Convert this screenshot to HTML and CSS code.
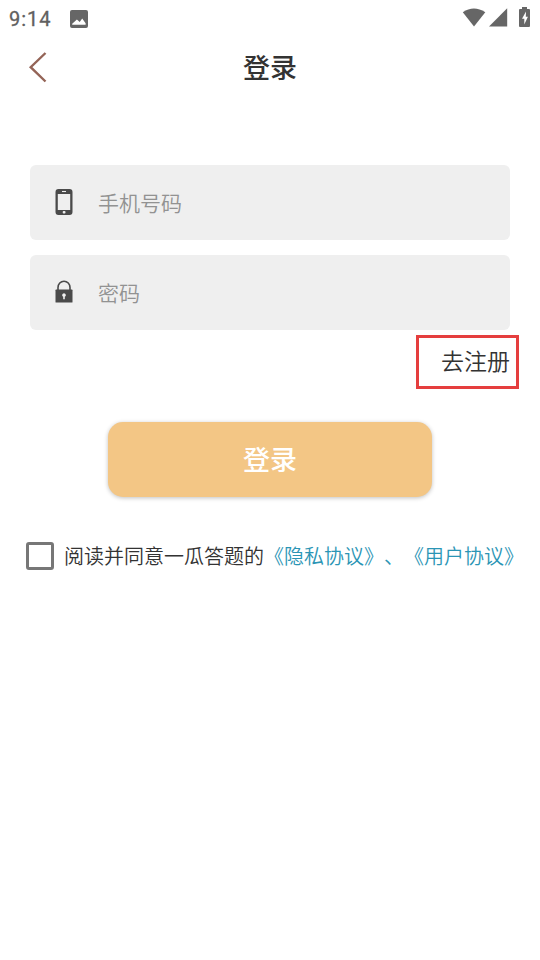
FILE: index.html
```
<!DOCTYPE html>
<html lang="zh-CN">
<head>
  <meta charset="UTF-8">
  <meta name="viewport" content="width=device-width, initial-scale=1.0">
  <title>登录</title>
  <link rel="stylesheet" href="styles.css">
</head>
<body>
  <div class="status-bar">
    <span class="time">9:14</span>
    <svg class="photo-icon" width="18" height="18" viewBox="0 0 18 18">
      <path fill="#666" fill-rule="evenodd" d="M2 0h14a2 2 0 0 1 2 2v14a2 2 0 0 1-2 2H2a2 2 0 0 1-2-2V2a2 2 0 0 1 2-2zM2.2 14.8h13.4v-1.6l-3.4-4.6-2.5 3.4-2.8-2.4-4.7 4.2z"/>
    </svg>
    <div class="status-right">
      <svg width="24" height="20" viewBox="0 0 24 20">
        <path fill="#666" d="M0.8 4.2Q11.8-3.2 23.3 4.2L12 18.6z"/>
      </svg>
      <svg width="19" height="19" viewBox="0 0 19 19">
        <path fill="#666" d="M18.2 0.3v18.2H0z"/>
      </svg>
      <svg class="battery" width="11" height="20" viewBox="0 0 11 20">
        <path fill="#666" d="M3 0h5v2h2a1 1 0 0 1 1 1v16a1 1 0 0 1-1 1H1a1 1 0 0 1-1-1V3a1 1 0 0 1 1-1h2z"/>
        <path fill="#fff" d="M7 4.6L3 11.7h2.3v5.8l3.6-7.8H6.8z"/>
      </svg>
    </div>
  </div>

  <div class="header">
    <svg class="back" width="20" height="32" viewBox="0 0 20 32">
      <path d="M17.5 2L2.7 16.2l14.8 14.3" fill="none" stroke="#946457" stroke-width="2.4"/>
    </svg>
    <h1>登录</h1>
  </div>

  <form class="login-form">
    <label class="field">
      <svg width="18" height="26" viewBox="0 0 18 26">
        <path fill="#4a4a4a" fill-rule="evenodd" d="M3.5 0h11a3 3 0 0 1 3 3v20a3 3 0 0 1-3 3h-11a3 3 0 0 1-3-3V3a3 3 0 0 1 3-3zM2.8 4.9v16h12.4v-16z"/>
        <path d="M7 2.5h4" stroke="#efefef" stroke-width="1.1"/>
        <rect x="7.7" y="22" width="2.8" height="2.6" rx="1" fill="#efefef"/>
      </svg>
      <input type="text" placeholder="手机号码">
    </label>
    <label class="field">
      <svg width="18" height="26" viewBox="0 0 18 26">
        <path d="M3 12V8.5a6 6.3 0 0 1 12 0V12" fill="none" stroke="#4a4a4a" stroke-width="1.6"/>
        <rect x="0.5" y="10.6" width="17" height="13" rx="0.6" fill="#4a4a4a"/>
        <path fill="#efefef" d="M9 14.2a1.9 1.9 0 0 1 .8 3.6v2.4H8.2v-2.4A1.9 1.9 0 0 1 9 14.2z"/>
      </svg>
      <input type="password" placeholder="密码">
    </label>
    <a class="register">去注册</a>
    <button type="button" class="login-btn">登录</button>
    <label class="agree">
      <input type="checkbox">
      <span>阅读并同意一瓜答题的<span class="link">《隐私协议》、《用户协议》</span></span>
    </label>
  </form>
</body>
</html>
```

FILE: styles.css
```
* {
  box-sizing: border-box;
}
body {
  margin: 0;
  min-height: 100vh;
  background: #fff;
  color: #333;
  font-family: "Noto Sans CJK SC", sans-serif;
}
.status-bar {
  display: flex;
  align-items: center;
  height: 37px;
  padding: 0 10px 0 9px;
}
.time {
  width: 60.5px;
  font: 400 20px/24px Roboto, sans-serif;
  letter-spacing: 1px;
  color: #606060;
  -webkit-text-stroke: 0.3px #606060;
}
.status-right {
  display: flex;
  align-items: center;
  margin: 0 0 2px auto;
  gap: 3px;
}
.battery {
  margin: 0 0 1px 8px;
}
.header {
  position: relative;
  height: 60px;
}
.header h1 {
  margin: 0;
  font-size: 27px;
  font-weight: 500;
  line-height: 60px;
  text-align: center;
}
.back {
  position: absolute;
  left: 28px;
  top: 14px;
}
.login-form {
  display: flex;
  flex-direction: column;
  padding: 68px 30px 0;
}
.field {
  display: flex;
  align-items: center;
  height: 75px;
  margin-bottom: 15px;
  padding: 0 25px;
  border-radius: 6px;
  background: #efefef;
}
.field svg {
  margin-bottom: 1px;
}
.field input {
  flex: 1;
  margin: 0 0 2px 25px;
  padding: 0;
  border: none;
  outline: none;
  background: none;
  font: 350 21px/32px "Noto Sans CJK SC", sans-serif;
}
.field input::placeholder {
  color: #929292;
}
.register {
  align-self: flex-end;
  width: 103px;
  height: 54px;
  margin: -10px -9px 0 0;
  padding-right: 6px;
  border: 3px solid #e53e3e;
  font-size: 23px;
  font-weight: 350;
  line-height: 44px;
  text-align: right;
}
.login-btn {
  align-self: center;
  width: 324px;
  height: 75px;
  margin-top: 33px;
  padding: 0 0 2px;
  border: none;
  border-radius: 15px;
  background: #f3c685;
  box-shadow: 0 1px 4px rgba(0, 0, 0, 0.25);
  color: #fff;
  font: 500 27px/73px "Noto Sans CJK SC", sans-serif;
}
.agree {
  display: flex;
  align-items: center;
  margin: 44px -20px 0 -4px;
  font-size: 20px;
  font-weight: 350;
  line-height: 30px;
  white-space: nowrap;
  text-spacing-trim: space-all;
}
.agree input {
  flex: none;
  appearance: none;
  width: 28px;
  height: 28px;
  margin: 0 10px 0 0;
  border: 3px solid #777;
  border-radius: 3px;
}
.link {
  color: #2b95b5;
}
```
